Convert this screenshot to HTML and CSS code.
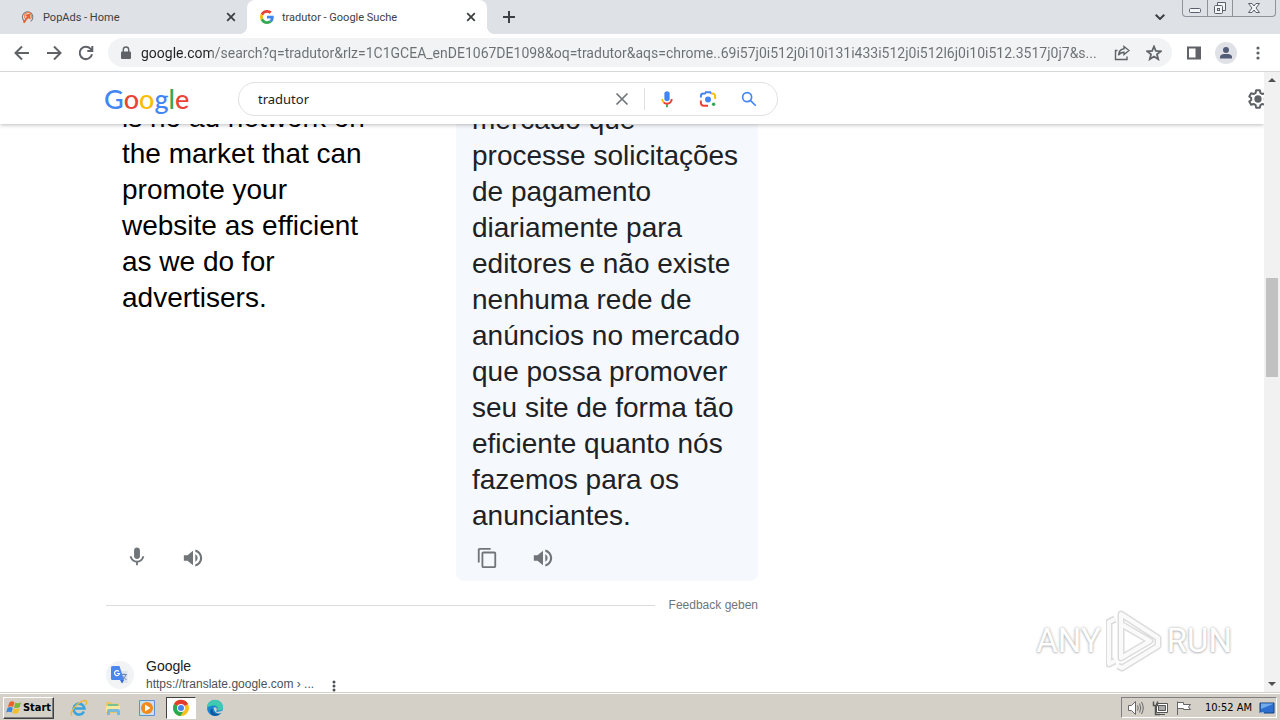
FILE: index.html
```html
<!DOCTYPE html>
<html lang="de">
<head>
  <meta charset="utf-8">
  <title>tradutor - Google Suche</title>
  <link rel="stylesheet" href="styles.css">
</head>

<body>

  <!-- Tab strip -->
  <div class="tabstrip">
    <div class="tab">
      <svg class="favicon" viewBox="0 0 16 16" fill="none">
        <path d="M5 13.5A6 6 0 1 1 11 13" stroke="#777" stroke-width="1.2"/>
        <path d="M6 10.5A4 4 0 1 1 10.5 10" stroke="#f0804a" stroke-width="1.2"/>
        <path d="M3 14.5L8.5 7M5.5 6.5L9.5 5.5L9.5 10" stroke="#e8602c" stroke-width="2"/>
      </svg>
      <span class="tab-title">PopAds - Home</span>
      <button class="tab-close" aria-label="Close tab"><svg viewBox="0 0 10 10"><path d="M1.2 1.2L8.8 8.8M8.8 1.2L1.2 8.8"/></svg></button>
    </div>
    <div class="tab active">
      <svg class="favicon" viewBox="0 0 48 48">
        <path fill="#ea4335" d="M24 9.500c3.500 0 6.700 1.200 9.200 3.600l6.900-6.900C35.900 2.400 30.500 0 24 0 14.600 0 6.500 5.400 2.600 13.200l8 6.200C12.400 13.700 17.700 9.500 24 9.500z"/>
        <path fill="#4285f4" d="M47 24.500c0-1.600-.2-3.100-.4-4.500H24v9h12.900c-.6 3-2.300 5.500-4.800 7.200l7.700 6C44.400 38 47 31.800 47 24.500z"/>
        <path fill="#fbbc05" d="M10.500 28.600c-.5-1.500-.8-3-.8-4.600s.3-3.100.8-4.600l-8-6.200C.9 16.500 0 20.100 0 24s.9 7.500 2.600 10.800z"/>
        <path fill="#34a853" d="M24 48c6.500 0 11.900-2.100 15.900-5.800l-7.700-6c-2.200 1.500-4.900 2.300-8.200 2.300-6.300 0-11.600-4.200-13.500-9.900l-8 6.200C6.500 42.600 14.600 48 24 48z"/>
      </svg>
      <span class="tab-title">tradutor - Google Suche</span>
      <button class="tab-close" aria-label="Close tab"><svg viewBox="0 0 10 10"><path d="M1.2 1.2L8.8 8.8M8.8 1.2L1.2 8.8"/></svg></button>
    </div>
    <button class="new-tab" aria-label="New tab"><svg viewBox="0 0 12 12"><path d="M6 0V12M0 6H12"/></svg></button>
    <button class="tab-search" aria-label="Search tabs"><svg viewBox="0 0 10 6"><path d="M.7 .7L5 5L9.3 .7"/></svg></button>
    <div class="window-buttons">
      <button aria-label="Minimize"><svg width="14" height="16" viewBox="0 0 14 16"><rect x="1.5" y="8.5" width="11" height="4" rx="1"/></svg></button>
      <button aria-label="Restore"><svg width="14" height="16" viewBox="0 0 14 16"><path d="M4.500 5V2.500H12.500V10.500H10"/><rect x="1.500" y="5.500" width="8" height="8" rx="1"/><rect x="4.500" y="8.500" width="2" height="2"/></svg></button>
      <button class="wide" aria-label="Close"><svg width="14" height="16" viewBox="0 0 14 16"><path d="M1.500 3.500H5L7 6L9 3.500H12.500L9 8L12.500 12.500H9L7 10L5 12.500H1.500L5 8Z"/></svg></button>
    </div>
  </div>

  <!-- Toolbar with the address bar -->
  <div class="toolbar">
    <button aria-label="Back"><svg class="i16 stroke" viewBox="0 0 16 16"><path d="M15 8H2M8 1.500L1.500 8L8 14.500"/></svg></button>
    <button aria-label="Forward"><svg class="i16 stroke" viewBox="0 0 16 16"><path d="M1 8H14M8 1.500L14.500 8L8 14.500"/></svg></button>
    <button aria-label="Reload"><svg class="i16 stroke" viewBox="0 0 16 16"><path d="M14 9.200A6.200 6.200 0 1 1 12.600 3.800L14 5.300M14.300 1V6H9.300"/></svg></button>
    <div class="omnibox">
      <svg class="lock" viewBox="0 0 10 14"><path d="M1 5.500H9Q10 5.500 10 6.500V12Q10 13 9 13H1Q0 13 0 12V6.500Q0 5.500 1 5.500Z" fill="#5f6368"/><path d="M2.300 6V3.700A2.700 2.700 0 0 1 7.700 3.700V6" fill="none" stroke="#5f6368" stroke-width="1.400"/></svg>
      <input class="address" type="text" aria-label="Address" value="google.com/search?q=tradutor&amp;rlz=1C1GCEA_enDE1067DE1098&amp;oq=tradutor&amp;aqs=chrome..69i57j0i512j0i10i131i433i512j0i512l6j0i10i512.3517j0j7&amp;s...">
      <button aria-label="Share"><svg class="i16 thin" viewBox="0 0 16 16"><path d="M3.500 5.500H1.500V14.500H13V11.500"/><path d="M10 1.500L15 5.500L10 9.500V7.200C7.500 7.200 5.800 8.200 4.500 10.200C4.800 6.800 6.800 4.200 10 3.800Z"/></svg></button>
      <button aria-label="Bookmark"><svg class="i16 star" viewBox="0 0 16 16"><path d="M8 1.500L9.900 6L14.700 6.300L11 9.400L12.200 14.200L8 11.600L3.800 14.200L5 9.400L1.300 6.300L6.100 6Z"/></svg></button>
    </div>
    <button aria-label="Side panel"><svg class="i16" viewBox="0 0 16 16"><path fill="#5f6368" fill-rule="evenodd" d="M1 1.500H15V14.500H1ZM3 3.500V12.500H9.500V3.500Z"/></svg></button>
    <button class="avatar" aria-label="Profile"><svg class="i16" viewBox="0 0 16 16"><circle cx="8" cy="5" r="3" fill="#525c78"/><path d="M2 13.500V12C2 9.500 5 9 8 9S14 9.500 14 12V13.500Z" fill="#525c78"/></svg></button>
    <button aria-label="Menu"><svg class="i16" viewBox="0 0 16 16" fill="#5f6368"><circle cx="8" cy="3" r="1.600"/><circle cx="8" cy="8" r="1.600"/><circle cx="8" cy="13" r="1.600"/></svg></button>
  </div>

  <!-- Page -->
  <div class="viewport">
    <div class="page">
      <header class="header">
        <a class="logo" href="#"><span class="blue">G</span><span class="red">o</span><span class="yellow">o</span><span class="blue">g</span><span class="green">l</span><span class="red">e</span></a>
        <form class="search">
          <input type="text" aria-label="Suche" value="tradutor">
          <button type="button" aria-label="Löschen"><svg class="i14" viewBox="0 0 14 14"><path d="M1.500 1.500L12.500 12.500M12.500 1.500L1.500 12.500" stroke="#70757a" stroke-width="1.700"/></svg></button>
          <span class="separator"></span>
          <button type="button" aria-label="Sprachsuche"><svg class="i18" viewBox="0 0 24 24"><path fill="#4285f4" d="M12 15c1.900 0 3.500-1.300 3.500-3V4.500C15.500 2.800 13.900 1.500 12 1.500S8.500 2.800 8.500 4.500V12c0 1.700 1.600 3 3.500 3z"/><path fill="#34a853" d="M10.800 18.900h2.400V23h-2.400z"/><path fill="#fbbc04" d="M4.500 12H7c0 1.400.6 2.700 1.500 3.600L6.800 17.300C5.300 15.900 4.500 14 4.500 12z"/><path fill="#ea4335" d="M12 17c2.800 0 5-2.200 5-5h2.500c0 4.200-3.400 7.500-7.500 7.500-2 0-3.900-.9-5.200-2.200l1.700-1.700c.9.900 2.100 1.400 3.500 1.400z"/></svg></button>
          <button type="button" aria-label="Bildersuche"><svg class="i18" viewBox="0 0 24 24" fill="none" stroke-width="2.600"><path stroke="#ea4335" d="M2.500 14V17A4 4 0 0 0 6.500 21H12"/><path stroke="#4285f4" d="M2.500 10V8A3.500 3.500 0 0 1 6 4.800H8L9 3H15L16 4.800"/><path stroke="#fbbc04" d="M16 4.800H18A3.500 3.500 0 0 1 21.500 8.500V12"/><circle cx="12" cy="12.500" r="4" fill="#4285f4"/><circle cx="19.500" cy="19" r="2.300" fill="#34a853"/></svg></button>
          <button type="button" aria-label="Suchen"><svg class="i18" viewBox="0 0 24 24"><path fill="none" stroke="#4285f4" stroke-width="2.200" d="M14.500 14.500L21 21M15.500 9.500A6 6 0 1 1 3.500 9.500A6 6 0 1 1 15.500 9.500Z"/></svg></button>
        </form>
        <button class="settings" aria-label="Einstellungen"><svg viewBox="0 0 24 24" fill="none"><path stroke="#5f6368" stroke-width="2.200" stroke-linejoin="round" d="M10 2.500H14L14.600 5.300L16.800 6.600L19.500 5.700L21.500 9.200L19.400 11V13L21.500 14.800L19.500 18.300L16.800 17.400L14.600 18.700L14 21.500H10L9.400 18.700L7.200 17.400L4.500 18.300L2.500 14.800L4.600 13V11L2.500 9.200L4.500 5.700L7.200 6.600L9.400 5.300Z"/><circle cx="12" cy="12" r="4" fill="#5f6368"/></svg></button>
      </header>

      <main class="content">
        <!-- Translation box: source on the left, result on the right -->
        <section class="translate">
          <div class="source">
            <p>is no ad network on the market that can promote your website as efficient as we do for advertisers.</p>
            <div class="actions">
              <button aria-label="Spracheingabe"><svg class="i22" viewBox="0 0 24 24" fill="#70757a"><path d="M12 13c1.900 0 3.200-1.300 3.200-3V3.500c0-1.700-1.300-3-3.200-3s-3.200 1.300-3.200 3V10c0 1.700 1.300 3 3.200 3z"/><path d="M17.900 10c-.5 2.900-2.900 5-5.900 5s-5.400-2.100-5.900-5H4.100c.5 3.600 3.300 6.400 6.900 6.900V20h2v-3.100c3.600-.5 6.400-3.300 6.900-6.900z"/></svg></button>
              <button aria-label="Anhören"><svg class="i22" viewBox="0 0 24 24" fill="#70757a"><path d="M2 9v6h4l6 5V4L6 9H2zM17 12c0-1.800-1-3.300-2.500-4v8c1.500-.7 2.500-2.200 2.500-4zM14.500 2.700v2.400c3.100.9 5.200 3.600 5.200 6.900s-2.100 6-5.200 6.900v2.400c4.300-.9 7.500-4.700 7.500-9.300s-3.200-8.400-7.500-9.300z"/></svg></button>
            </div>
          </div>
          <div class="result">
            <p lang="pt">mercado que processe solicitações de pagamento diariamente para editores e não existe nenhuma rede de anúncios no mercado que possa promover seu site de forma tão eficiente quanto nós fazemos para os anunciantes.</p>
            <div class="actions">
              <button aria-label="Kopieren"><svg class="i22" viewBox="0 0 24 24" fill="#70757a"><path d="M16 1H4C2.900 1 2 1.900 2 3v14h2V3h12V1zm4 4H8C6.900 5 6 5.900 6 7v14c0 1.100.9 2 2 2h12c1.100 0 2-.9 2-2V7c0-1.100-.9-2-2-2zm0 16H8V7h12v14z"/></svg></button>
              <button aria-label="Anhören"><svg class="i22" viewBox="0 0 24 24" fill="#70757a"><path d="M2 9v6h4l6 5V4L6 9H2zM17 12c0-1.800-1-3.300-2.500-4v8c1.500-.7 2.500-2.200 2.500-4zM14.500 2.700v2.400c3.100.9 5.200 3.600 5.200 6.900s-2.100 6-5.200 6.900v2.400c4.300-.9 7.500-4.700 7.500-9.300s-3.200-8.400-7.500-9.300z"/></svg></button>
            </div>
          </div>
        </section>

        <div class="feedback"><a href="#">Feedback geben</a></div>

        <!-- First search result -->
        <article class="hit">
          <span class="hit-icon">
            <svg viewBox="0 0 18 18"><path d="M8 5H16.500V17H11Z" fill="#dfe3ea"/><path d="M0 1.500Q0 0 1.500 0H8.500L13 14H1.500Q0 14 0 12.500Z" fill="#4a86ee"/><path d="M9 14H13L11 17.500Z" fill="#3367d6"/><path d="M8 5.500A2.500 2.500 0 1 0 8.500 7.500H6" fill="none" stroke="#fff" stroke-width="1.200"/><path d="M10.500 8.500H16M13 7.500V8.500M15 8.500Q14 12 11.500 13.500M11.500 10L15.500 14" fill="none" stroke="#6d86b5"/></svg>
          </span>
          <div class="hit-text">
            <div class="hit-name">Google</div>
            <div class="hit-url">https://translate.google.com › ...</div>
          </div>
          <button class="hit-menu" aria-label="Mehr"><svg viewBox="0 0 4 12" fill="#4d5156"><circle cx="2" cy="2" r="1.500"/><circle cx="2" cy="6" r="1.500"/><circle cx="2" cy="10" r="1.500"/></svg></button>
        </article>
      </main>
    </div>

    <div class="scrollbar">
      <svg viewBox="0 0 16 16"><path d="M4 10L8 6L12 10Z" fill="#505050"/></svg>
      <div class="track"><div class="thumb"></div></div>
      <svg viewBox="0 0 16 16"><path d="M4 6L8 10L12 6Z" fill="#505050"/></svg>
    </div>

    <div class="watermark">
      <span>ANY</span>
      <svg viewBox="0 0 56 62" fill="none" stroke-linejoin="round"><path class="shade" d="M9 9L3 12V54L9 51M15 16V4L52 28V36L16 58L12 56M15 14V48L44 31L15 14"/><path class="light" d="M9 9L3 12V54L9 51M15 16V4L52 28V36L16 58L12 56M15 14V48L44 31L15 14"/></svg>
      <span>RUN</span>
    </div>
  </div>

  <!-- Windows taskbar -->
  <div class="taskbar">
    <button class="start">
      <svg viewBox="0 0 18 16"><path d="M4 2Q7 0 9.500 2L8 7.500Q5.500 5.500 2 7.500Z" fill="#e8622c"/><path d="M10.500 2.500Q13.500 4 17 2L15.500 7.500Q12 9.500 9 8Z" fill="#7db83a"/><path d="M1.700 8.500Q5 6.500 7.700 8.500L6.200 13.500Q3.500 11.800 .2 13.500Z" fill="#3a86d8"/><path d="M8.700 9Q12 10.500 15.200 8.500L13.700 14Q10.500 16 7.200 14.300Z" fill="#f5bd2b"/></svg>
      Start
    </button>
    <button class="task" aria-label="Internet Explorer"><svg viewBox="0 0 18 18" fill="none"><path d="M14 12.500A5.500 5.500 0 1 1 14.500 9.500H5" stroke="#3aa5dc" stroke-width="2.600"/><path d="M2 16.500C-1 14 7 3 14.500 1.500C17.500 1 17 4 15.500 6" stroke="#e8b839" stroke-width="1.400"/></svg></button>
    <button class="task" aria-label="Explorer"><svg viewBox="0 0 18 18"><path d="M2 3H7L8 4.500H15V14H2Z" fill="#e9c766"/><path d="M4 5H14V8H4Z" fill="#7cc090"/><path d="M2 7H16V13H2Z" fill="#f8e7a2"/><path d="M3 16V12Q3 10 5 10H14Q16 10 16 12V16H13V13H6V16Z" fill="#79b9dc"/></svg></button>
    <button class="task" aria-label="Media Player"><svg viewBox="0 0 18 18"><path d="M1.500 1.500H16.500V16.500H1.500Z" fill="#c9e0f4" stroke="#5b95c9"/><circle cx="9" cy="9" r="6" fill="#f08a1c"/><path d="M7 5.500L12.500 9L7 12.500Z" fill="#fff"/></svg></button>
    <button class="task pressed" aria-label="Chrome"><svg viewBox="0 0 18 18"><circle cx="9" cy="9" r="8" fill="#fbc116"/><path d="M9 9L2 5A8 8 0 0 1 16 5Z" fill="#e33b2e"/><path d="M9 9L2.100 5A8 8 0 0 0 8.500 17L12 11Z" fill="#2da94f"/><circle cx="9" cy="9" r="4" fill="#fff"/><circle cx="9" cy="9" r="3" fill="#4285f4"/></svg></button>
    <button class="task" aria-label="Edge"><svg viewBox="0 0 18 18"><circle cx="9" cy="9" r="8" fill="#1686d0"/><path d="M1 9A8 8 0 0 1 17 8.500C17 11.500 13.500 12.300 11 11C12.500 9 11 6.500 8 6.500C5 6.500 2 7.500 1 9Z" fill="#3fc9b0"/><path d="M6.500 9.500C6 14 10 16 14.500 14.500A8 8 0 0 1 6 16C3.500 13.500 4 10 6.500 9.500Z" fill="#11529c"/><path d="M7.500 9Q9 7.500 10.500 9Q11.500 10.500 10 12.500Q14 13.500 17 11L15.500 14Q9 16 7.500 9Z" fill="#d4d0c8"/></svg></button>
    <div class="tray">
      <svg viewBox="0 0 18 16" fill="none" stroke="#666"><path d="M1.500 5.500H4.500L8.500 1.500V14.500L4.500 10.500H1.500Z" fill="#fff"/><path d="M10.500 5.500Q12 8 10.500 10.500M12.500 3.500Q15 8 12.500 12.500M14.500 2Q18 8 14.500 14"/></svg>
      <svg viewBox="0 0 18 16" fill="none" stroke="#555"><path d="M5.500 3.500H16.500V12.500H5.500ZM8 14.500H14" fill="#fff"/><path d="M7.500 5.500H14.500V10.500H7.500Z" fill="#aaa"/><path d="M2.500 1.500V5.500H6.500V1.500M4.500 5.500V14.500H9" stroke-width="1.500"/></svg>
      <svg viewBox="0 0 18 16" fill="#fff" stroke="#666"><path d="M2.500 15V1.500M2.500 2.500H8.500V4.500H15.500L13.500 7L15.500 9.500H8.500V8.500H2.500"/></svg>
      <span class="clock">10:52 AM</span>
      <svg viewBox="0 0 18 16"><path d="M2 3H16V13H2Z" fill="#2c6fd1" stroke="#12427f"/><path d="M3 9L15 4V3.500H3Z" fill="#73a9ef"/><path d="M2 13H6" stroke="#fff"/></svg>
    </div>
  </div>

</body>
</html>
```
FILE: styles.css
```css
* {
  box-sizing: border-box;
}

body {
  margin: 0;
  height: 100vh;
  display: flex;
  flex-direction: column;
  overflow: hidden;
  background: #fff;
  font-family: "Liberation Sans", Arial, sans-serif;
}

button {
  display: flex;
  align-items: center;
  justify-content: center;
  flex: none;
  padding: 0;
  border: 0;
  background: none;
  font: inherit;
}

input {
  min-width: 0;
  padding: 0;
  border: 0;
  outline: 0;
  background: none;
}

p {
  margin: 0;
}

a {
  text-decoration: none;
}

svg {
  display: block;
  flex: none;
}

/* Icon sizes */
.i14 { width: 14px; height: 14px; }
.i16 { width: 16px; height: 16px; }
.i18 { width: 18px; height: 18px; }
.i22 { width: 22px; height: 22px; }

.stroke {
  fill: none;
  stroke: #5f6368;
  stroke-width: 2;
}

.thin {
  fill: none;
  stroke: #5f6368;
  stroke-width: 1.4;
}

.star {
  fill: none;
  stroke: #5f6368;
  stroke-width: 1.8;
}

/* Tab strip */
.tabstrip {
  display: flex;
  align-items: center;
  height: 34px;
  flex: none;
  padding-left: 8px;
  background: #dee1e6;
}

.tab {
  position: relative;
  display: flex;
  align-items: center;
  gap: 8px;
  width: 239px;
  height: 34px;
  padding: 0 11px 0 13px;
  font: 11px Roboto, sans-serif;
  color: #3c4043;
}

.tab.active {
  width: 240px;
  background: #fff;
  border-radius: 8px 8px 0 0;
}

/* The outward curves at the foot of the active tab */
.tab.active:before,
.tab.active:after {
  content: "";
  position: absolute;
  bottom: 0;
  width: 8px;
  height: 8px;
}

.tab.active:before {
  right: 100%;
  background: radial-gradient(circle at 0 0, #dee1e6 8px, #fff 8px);
}

.tab.active:after {
  left: 100%;
  background: radial-gradient(circle at 100% 0, #dee1e6 8px, #fff 8px);
}

.favicon {
  width: 14px;
  height: 14px;
}

.tab-title {
  flex: 1;
  white-space: nowrap;
}

.tab-close svg {
  width: 10px;
  height: 10px;
  stroke: #3c4043;
  stroke-width: 1.8;
}

.new-tab {
  margin-left: 16px;
}

.new-tab svg {
  width: 12px;
  height: 12px;
  stroke: #3c4043;
  stroke-width: 2;
}

.tab-search {
  margin-left: auto;
  margin-right: 17px;
}

.tab-search svg {
  width: 10px;
  height: 6px;
  fill: none;
  stroke: #3c4043;
  stroke-width: 2;
}

.window-buttons {
  display: flex;
  align-self: flex-start;
  height: 17px;
  margin-right: 4px;
  border: 1px solid #8d929b;
  border-top: 0;
  border-radius: 0 0 4px 4px;
}

.window-buttons button {
  width: 25px;
  border-right: 1px solid #8d929b;
}

.window-buttons .wide {
  width: 42px;
  border-right: 0;
}

.window-buttons svg {
  fill: #f4f5f7;
  stroke: #5b606b;
}

/* Toolbar */
.toolbar {
  display: flex;
  align-items: center;
  gap: 16px;
  height: 38px;
  flex: none;
  padding: 0 14px;
  border-bottom: 1px solid #d5d7da;
}

.omnibox {
  flex: 1;
  min-width: 0;
  display: flex;
  align-items: center;
  gap: 16px;
  height: 29px;
  padding: 0 10px 0 13px;
  margin: 0 -2px;
  border-radius: 15px;
  background: #f1f3f4;
}

.lock {
  width: 10px;
  height: 14px;
  margin-right: -6px;
}

/* The host is dark, the rest of the address grey */
.address {
  flex: 1;
  margin-right: -8px;
  font: 14px Roboto, sans-serif;
  color: transparent;
  background: linear-gradient(to right, #202124 71px, #6a6f74 71px);
  -webkit-background-clip: text;
  background-clip: text;
}

.avatar {
  width: 22px;
  height: 22px;
  margin: 0 -3px;
  border-radius: 50%;
  background: #dfe1e7;
}

/* Page area and its scrollbar */
.viewport {
  position: relative;
  flex: 1;
  min-height: 0;
  display: flex;
}

.page {
  flex: 1;
  min-width: 0;
  display: flex;
  flex-direction: column;
  overflow: hidden;
}

.header {
  position: relative;
  z-index: 1;
  flex: none;
  display: flex;
  align-items: center;
  height: 52px;
  padding: 2px 0 0 104px;
  background: #fff;
  box-shadow: 0 1px 4px rgba(32, 33, 36, 0.3);
}

.logo {
  display: flex;
  width: 134px;
  font: 500 27px/34px Lato, sans-serif;
}

.blue { color: #4285f4; }
.red { color: #ea4335; }
.yellow { color: #fbbc05; }
.green { color: #34a853; }

.search {
  display: flex;
  align-items: center;
  width: 540px;
  height: 34px;
  padding: 0 19px;
  border: 1px solid #dfe1e5;
  border-radius: 17px;
}

.search input {
  flex: 1;
  font: 13px "Noto Sans", sans-serif;
  color: #202124;
}

.search button + button {
  margin-left: 23px;
}

.separator {
  width: 1px;
  height: 22px;
  margin: 0 13px 0 15px;
  background: #dfe1e5;
}

.settings {
  margin-left: auto;
  margin-right: -5px;
}

.settings svg {
  width: 22px;
  height: 22px;
}

/* Scrolled down, so the column hangs from its lower end */
.content {
  flex: 1;
  min-height: 0;
  display: flex;
  flex-direction: column;
  justify-content: flex-end;
  overflow: hidden;
  width: 652px;
  margin-left: 106px;
}

.translate {
  display: grid;
  grid-template-columns: 302px 302px;
  justify-content: space-between;
  font-size: 28px;
  line-height: 36px;
  color: #202124;
}

.source,
.result {
  display: flex;
  flex-direction: column;
  padding: 8px 16px 0;
}

.source {
  padding-right: 40px;
  color: #000;
}

.result {
  padding-top: 10px;
  border-radius: 0 0 8px 8px;
  background: #f5f8fc;
}

.actions {
  display: flex;
  align-items: center;
  gap: 34px;
  height: 47px;
  margin-top: auto;
  padding-left: 4px;
}

.feedback {
  display: flex;
  align-items: center;
  gap: 14px;
  margin-top: 16px;
  line-height: 16px;
}

.feedback:before {
  content: "";
  flex: 1;
  height: 1px;
  background: #dadce0;
}

.feedback a {
  font-size: 12px;
  color: #70757a;
}

.hit {
  display: flex;
  align-items: center;
  margin-top: 44px;
}

.hit-icon {
  display: flex;
  align-items: center;
  justify-content: center;
  width: 28px;
  height: 28px;
  margin-right: 12px;
  border-radius: 50%;
  background: #f1f3f4;
}

.hit-icon svg {
  width: 18px;
  height: 18px;
}

.hit-name {
  font-size: 14px;
  line-height: 19px;
  color: #202124;
}

.hit-url {
  font-size: 12px;
  line-height: 16px;
  color: #4d5156;
}

.hit-menu {
  align-self: flex-end;
  margin-left: 18px;
}

.hit-menu svg {
  width: 4px;
  height: 12px;
}

.scrollbar {
  display: flex;
  flex-direction: column;
  width: 16px;
  background: #f1f1f1;
}

.track {
  flex: 1;
  display: grid;
  grid-template-rows: 190fr 99fr 299fr;
  padding: 0 2px;
}

.thumb {
  grid-row: 2;
  background: #c1c1c1;
}

/* Watermark over the page */
.watermark {
  position: absolute;
  right: 48px;
  bottom: 20px;
  display: flex;
  align-items: center;
  gap: 5px;
  font: 33px/62px Roboto, sans-serif;
  color: #fff;
  text-shadow: 0 0 3px #aaa, 0 1px 2px #ccc;
}

.watermark svg {
  width: 56px;
  height: 62px;
}

.shade {
  stroke: #dcdcdc;
  stroke-width: 7;
}

.light {
  stroke: #fafafa;
  stroke-width: 4;
}

/* Taskbar */
.taskbar {
  flex: none;
  display: flex;
  align-items: center;
  gap: 4px;
  height: 28px;
  padding: 2px 3px 0;
  border-top: 1px solid #d4d0c8;
  box-shadow: inset 0 1px #fff;
  background: #d4d0c8;
  font: 11px "DejaVu Sans Condensed", "DejaVu Sans", sans-serif;
  color: #000;
}

.start {
  gap: 1px;
  width: 51px;
  height: 22px;
  margin-right: 6px;
  border: 1px solid;
  border-color: #fff #404040 #404040 #fff;
  box-shadow: inset -1px -1px #808080;
  font-weight: bold;
}

.start svg {
  width: 16px;
  height: 15px;
}

.task {
  width: 30px;
  height: 22px;
}

.task svg {
  width: 18px;
  height: 18px;
}

.task.pressed {
  border: 1px solid;
  border-color: #404040 #fff #fff #404040;
  background: #fff;
}

.tray {
  display: flex;
  align-items: center;
  gap: 6px;
  height: 21px;
  margin-left: auto;
  padding: 0 0 0 5px;
  border: 1px solid;
  border-color: #808080 #fff #fff #808080;
}

.tray svg {
  width: 18px;
  height: 16px;
}

.clock {
  margin-left: 6px;
}
```
